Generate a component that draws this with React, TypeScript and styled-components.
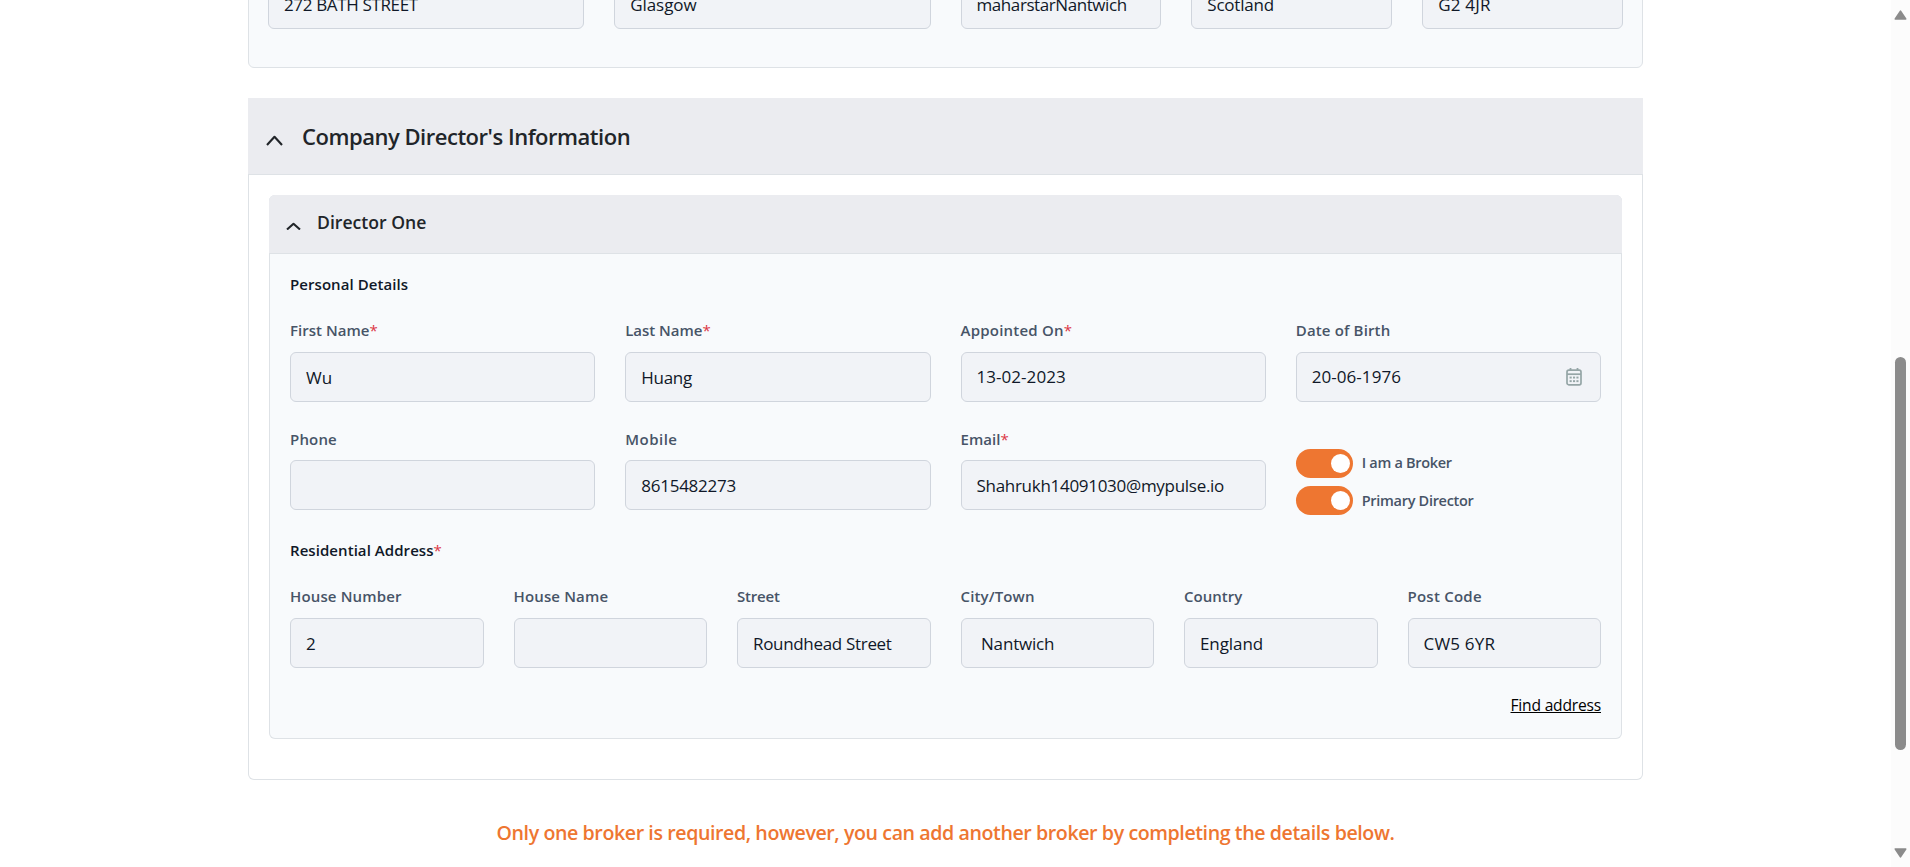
import React from 'react';
import styled, { createGlobalStyle } from 'styled-components';

const GlobalStyle = createGlobalStyle`
  *, *::before, *::after { box-sizing: border-box; }
  body {
    margin: 0;
    background: #fff;
    color: #212529;
    font-family: 'Segoe UI', 'Open Sans', 'Noto Sans', sans-serif;
    overflow: hidden;
  }
`;

const Shell = styled.div`
  display: flex;
  height: 867px;
  overflow: hidden;
`;

const Page = styled.main`
  flex: 1;
  min-width: 0;
  padding-left: 248px;
  overflow: hidden;
`;

const Content = styled.div`
  width: 1395px;
`;

const CompanyCard = styled.section`
  height: 128px;
  margin: -60px 0 30px;
  padding: 38px 19px 0;
  border: 1px solid #dee2e6;
  border-radius: 6px;
  background: #f8fafc;
`;

const CompanyRow = styled.div`
  display: grid;
  grid-template-columns: 316.25px 316.25px repeat(3, 200.83px);
  column-gap: 30px;
`;

const DirectorsCard = styled.section`
  height: 682px;
  border-radius: 0 0 6px 6px;
  box-shadow: inset 0 0 0 1px #dee2e6;
`;

const CardHeader = styled.header`
  display: flex;
  align-items: center;
  height: 77px;
  padding: 0 18px 1px;
  background: #ebecf0;
  box-shadow: inset 0 -1px 0 #dee2e6;
`;

const CardTitle = styled.h2`
  margin: 0 0 0 19px;
  font-size: 22px;
  font-weight: 600;
  line-height: 30px;
  letter-spacing: -0.48px;
`;

const DirectorPanel = styled.section`
  height: 544px;
  margin: 20px 21px 0;
  border-radius: 6px;
  background: #f8fafc;
  box-shadow: inset 0 0 0 1px #dee2e6;
`;

const PanelHeader = styled.header`
  display: flex;
  align-items: center;
  height: 59px;
  padding: 0 17px 5px;
  border-radius: 6px 6px 0 0;
  background: #ebecf0;
  box-shadow: inset 0 -1px 0 #dee2e6;
`;

const PanelTitle = styled.h3`
  margin: 0 0 0 16px;
  font-size: 17.6px;
  font-weight: 600;
  line-height: 24px;
`;

const PanelBody = styled.div`
  padding: 18px 21px 0;
`;

const GroupTitle = styled.h4`
  margin: 0 0 22px;
  font-size: 15px;
  font-weight: 600;
  line-height: 24px;
  letter-spacing: 0.06px;
  color: #101828;
`;

const FieldRow = styled.div<{ $columns: number; $after: number }>`
  display: grid;
  grid-template-columns: repeat(${(p) => p.$columns}, minmax(0, 1fr));
  column-gap: 30px;
  margin-bottom: ${(p) => p.$after}px;
`;

const Label = styled.label<{ $track?: number; $tight?: boolean }>`
  display: block;
  margin-bottom: ${(p) => (p.$tight ? 9 : 10)}px;
  font-size: 15px;
  font-weight: 600;
  line-height: 24px;
  letter-spacing: ${(p) => (p.$track ?? 0) + 0.12}px;
  color: #475467;
  white-space: nowrap;
`;

const Required = styled.span`
  font-weight: 400;
  color: #dc3545;
`;

const Box = styled.div<{ $track?: number; $raised?: boolean; $indent?: number }>`
  display: flex;
  align-items: center;
  justify-content: space-between;
  height: 50px;
  padding: ${(p) => (p.$raised ? 0 : 2)}px 18px 0 ${(p) => 15 + (p.$indent ?? 0)}px;
  border: 1px solid #d0d5dd;
  border-radius: 6px;
  background: #f1f3f7;
  font-size: 17px;
  line-height: 24px;
  letter-spacing: ${(p) => p.$track ?? 0}px;
  color: #101828;
  white-space: nowrap;
`;

const Toggles = styled.div`
  display: flex;
  flex-direction: column;
  gap: 8.5px;
  padding-top: 22px;
  margin-bottom: -10px;
`;

const ToggleRow = styled.div`
  display: flex;
  align-items: center;
  gap: 9px;
  height: 28.5px;
`;

const Switch = styled.span`
  display: flex;
  align-items: center;
  justify-content: flex-end;
  width: 57px;
  height: 28.5px;
  padding-right: 3px;
  border-radius: 15px;
  background: #ee7631;

  &::after {
    content: '';
    width: 19px;
    height: 19px;
    border-radius: 50%;
    background: #fff;
  }
`;

const ToggleLabel = styled.span<{ $drop?: number }>`
  padding-top: ${(p) => p.$drop ?? 0}px;
  font-size: 14.5px;
  font-weight: 600;
  line-height: 20px;
  letter-spacing: -0.3px;
  color: #475467;
`;

const LinkRow = styled.div`
  display: flex;
  justify-content: flex-end;
  margin-top: 25px;
`;

const FindLink = styled.a`
  font-size: 15.6px;
  line-height: 24px;
  letter-spacing: -0.2px;
  color: #000;
  text-decoration: underline;
  text-underline-offset: 1px;
  text-decoration-thickness: 1px;
`;

const Notice = styled.p`
  margin: 38px 0 0;
  font-size: 19.6px;
  font-weight: 600;
  line-height: 30px;
  letter-spacing: -0.41px;
  text-align: center;
  white-space: nowrap;
  color: #ee7631;
`;

const ScrollTrack = styled.div`
  display: flex;
  flex-direction: column;
  align-items: center;
  width: 19px;
  padding: 10px 0 9px;
  background: #fcfcfc;
`;

const ScrollThumb = styled.div`
  width: 11px;
  height: 393px;
  margin: 337px 0 auto;
  border-radius: 6px;
  background: #8b8b8b;
`;

const Chevron = ({ width, height, drop }: { width: number; height: number; drop: number }) => (
  <svg width={width} height={height + drop} viewBox={`0 0 ${width} ${height + drop}`} fill="none">
    <path
      d={`M1 ${height + drop - 1} L${width / 2} ${drop + 1.8} L${width - 1} ${height + drop - 1}`}
      stroke="#212529"
      strokeWidth="2.1"
      strokeLinejoin="round"
    />
  </svg>
);

const CalendarIcon = () => (
  <svg width="16" height="18" viewBox="0 0 16 18" fill="none">
    <rect x="1" y="2.2" width="14" height="14.6" rx="1.8" stroke="#95a5a6" strokeWidth="1.7" />
    <path d="M1 6.2H15" stroke="#95a5a6" strokeWidth="1.7" />
    <path d="M4.5 0V3M11.5 0V3" stroke="#95a5a6" strokeWidth="1.8" />
    <g fill="#95a5a6">
      <rect x="3.6" y="8.6" width="2.1" height="1.9" />
      <rect x="7" y="8.6" width="2.1" height="1.9" />
      <rect x="10.4" y="8.6" width="2.1" height="1.9" />
      <rect x="3.6" y="12.2" width="2.1" height="1.9" />
      <rect x="7" y="12.2" width="2.1" height="1.9" />
      <rect x="10.4" y="12.2" width="2.1" height="1.9" />
    </g>
  </svg>
);

const Arrow = ({ down }: { down?: boolean }) => (
  <svg width="13" height="10" viewBox="0 0 13 10">
    <path
      d={down ? 'M1.3 1H11.7L6.5 8.8Z' : 'M1.3 9H11.7L6.5 1.2Z'}
      fill="#8b8b8b"
      stroke="#8b8b8b"
      strokeWidth="1.6"
      strokeLinejoin="round"
    />
  </svg>
);

type FieldData = {
  label: string;
  value: string;
  required?: boolean;
  labelTrack?: number;
  track?: number;
  raised?: boolean;
  indent?: number;
  calendar?: boolean;
};

const company: FieldData[] = [
  { label: 'Street', value: '272 BATH STREET', track: -0.35 },
  { label: 'City/Town', value: 'Glasgow', track: -0.08 },
  { label: 'County', value: 'maharstarNantwich', track: -0.42 },
  { label: 'Country', value: 'Scotland', track: -0.23 },
  { label: 'Post Code', value: 'G2 4JR', track: 0.2 },
];

const names: FieldData[] = [
  { label: 'First Name', value: 'Wu', required: true, labelTrack: -0.1 },
  { label: 'Last Name', value: 'Huang', required: true, labelTrack: -0.15, track: -0.27 },
  { label: 'Appointed On', value: '13-02-2023', required: true, labelTrack: 0.1, track: 0.05, raised: true },
  { label: 'Date of Birth', value: '20-06-1976', labelTrack: 0.03, track: 0.05, raised: true, calendar: true },
];

const contacts: FieldData[] = [
  { label: 'Phone', value: '', labelTrack: 0.05 },
  { label: 'Mobile', value: '8615482273', labelTrack: 0.35, track: -0.25 },
  { label: 'Email', value: 'Shahrukh14091030@mypulse.io', required: true, labelTrack: -0.05, track: -0.29 },
];

const address: FieldData[] = [
  { label: 'House Number', value: '2', labelTrack: 0.03 },
  { label: 'House Name', value: '', labelTrack: 0.03 },
  { label: 'Street', value: 'Roundhead Street', labelTrack: -0.3, track: -0.32 },
  { label: 'City/Town', value: 'Nantwich', labelTrack: 0.02, track: -0.18, indent: 4.5 },
  { label: 'Country', value: 'England', labelTrack: -0.12, track: -0.08 },
  { label: 'Post Code', value: 'CW5 6YR', labelTrack: 0.12, track: 0.2 },
];

const Field = ({ field, tight }: { field: FieldData; tight?: boolean }) => (
  <div>
    <Label $track={field.labelTrack} $tight={tight}>
      {field.label}
      {field.required && <Required>*</Required>}
    </Label>
    <Box $track={field.track} $raised={field.raised} $indent={field.indent}>
      <span>{field.value}</span>
      {field.calendar && <CalendarIcon />}
    </Box>
  </div>
);

export default function App() {
  return (
    <Shell>
      <GlobalStyle />
      <Page>
        <Content>
          <CompanyCard>
            <CompanyRow>
              {company.map((field) => (
                <Box key={field.label} $track={field.track}>
                  {field.value}
                </Box>
              ))}
            </CompanyRow>
          </CompanyCard>

          <DirectorsCard>
            <CardHeader>
              <Chevron width={17} height={11} drop={8} />
              <CardTitle>Company Director's Information</CardTitle>
            </CardHeader>
            <DirectorPanel>
              <PanelHeader>
                <Chevron width={15} height={8.5} drop={8} />
                <PanelTitle>Director One</PanelTitle>
              </PanelHeader>
              <PanelBody>
                <GroupTitle>Personal Details</GroupTitle>
                <FieldRow $columns={4} $after={25}>
                  {names.map((field) => (
                    <Field key={field.label} field={field} />
                  ))}
                </FieldRow>
                <FieldRow $columns={4} $after={28}>
                  {contacts.map((field) => (
                    <Field key={field.label} field={field} tight />
                  ))}
                  <Toggles>
                    <ToggleRow>
                      <Switch />
                      <ToggleLabel>I am a Broker</ToggleLabel>
                    </ToggleRow>
                    <ToggleRow>
                      <Switch />
                      <ToggleLabel $drop={2}>Primary Director</ToggleLabel>
                    </ToggleRow>
                  </Toggles>
                </FieldRow>
                <GroupTitle>
                  Residential Address<Required>*</Required>
                </GroupTitle>
                <FieldRow $columns={6} $after={0}>
                  {address.map((field) => (
                    <Field key={field.label} field={field} />
                  ))}
                </FieldRow>
                <LinkRow>
                  <FindLink>Find address</FindLink>
                </LinkRow>
              </PanelBody>
            </DirectorPanel>
          </DirectorsCard>

          <Notice>
            Only one broker is required, however, you can add another broker by completing the details below.
          </Notice>
        </Content>
      </Page>
      <ScrollTrack>
        <Arrow />
        <ScrollThumb />
        <Arrow down />
      </ScrollTrack>
    </Shell>
  );
}
